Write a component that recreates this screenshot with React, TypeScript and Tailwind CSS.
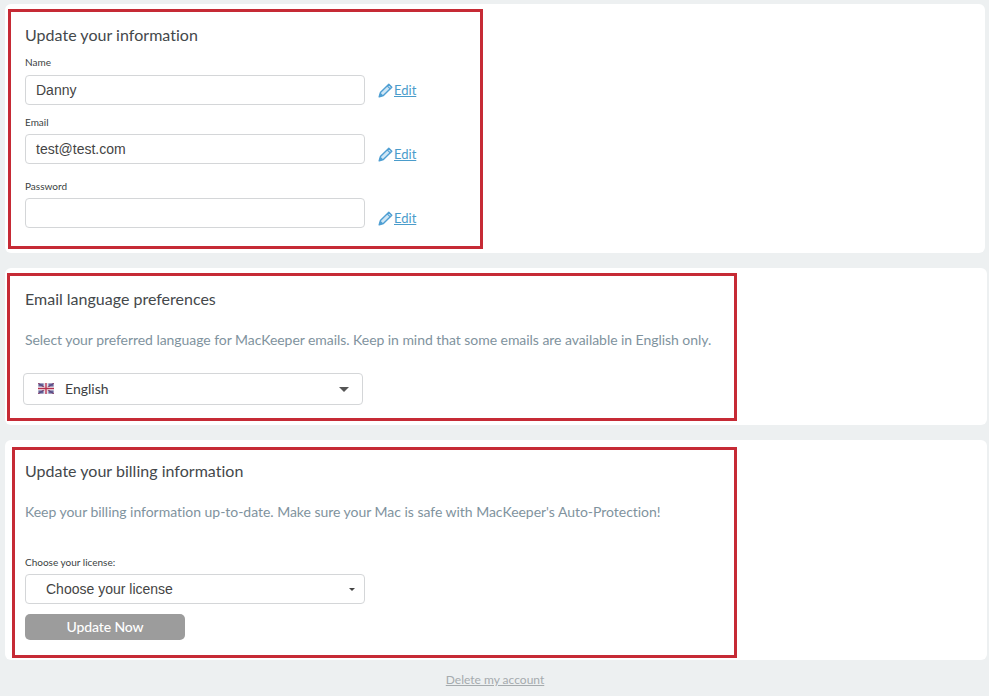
import React from "react";

function Pencil() {
  return (
    <svg width="15" height="15" viewBox="0 0 15 15" className="shrink-0" fill="none">
      <path d="M1.2 13.8 L2.4 9.6 L10.8 1.2 L13.8 4.2 L5.4 12.6 Z" fill="#cfe6f5" stroke="#4f9fd3" strokeWidth="1.4" strokeLinejoin="round" />
      <path d="M1 14 L2.2 9.4 L5.6 12.8 Z" fill="#4f9fd3" />
      <path d="M9.2 2.8 L12.2 5.8" stroke="#4f9fd3" strokeWidth="1.1" />
    </svg>
  );
}

function EditLink({ mt }: { mt: string }) {
  return (
    <a className={`flex items-center ml-[13px] text-[13px] leading-none text-[#4a9ccb] ${mt}`}>
      <Pencil />
      <span className="underline ml-[1px]">Edit</span>
    </a>
  );
}

function Flag() {
  return (
    <svg width="16" height="11" viewBox="0 0 16 11" className="shrink-0">
      <rect width="16" height="11" fill="#dcdbe8" />
      <path d="M0 0 L16 11 M16 0 L0 11" stroke="#a84a68" strokeWidth="1.2" />
      <rect x="0.5" y="0.5" width="5" height="3" fill="#4a4988" opacity="0.8" />
      <rect x="10.5" y="0.5" width="5" height="3" fill="#4a4988" opacity="0.8" />
      <rect x="0.5" y="7.5" width="5" height="3" fill="#4a4988" opacity="0.8" />
      <rect x="10.5" y="7.5" width="5" height="3" fill="#4a4988" opacity="0.8" />
      <path d="M8 0 V11 M0 5.5 H16" stroke="#fff" strokeWidth="2.6" />
      <path d="M8 0 V11 M0 5.5 H16" stroke="#b5304e" strokeWidth="1.4" />
    </svg>
  );
}

function Field({ label, value, labelClass, editMt }: { label: string; value: string; labelClass: string; editMt: string }) {
  return (
    <div>
      <div className={`text-[10px] leading-[12px] text-[#3a3f42] ${labelClass}`}>{label}</div>
      <div className="flex items-center">
        <div className="w-[340px] h-[30px] border border-[#d4d6d8] rounded-[4px] bg-white pl-[10px] flex items-center text-[14px] text-[#444] font-['Liberation_Sans',sans-serif]">
          {value}
        </div>
        <EditLink mt={editMt} />
      </div>
    </div>
  );
}

function Annotation({ className }: { className: string }) {
  return <div className={`absolute border-[3px] border-[#c62a35] pointer-events-none ${className}`} />;
}

export default function App() {
  return (
    <div className="w-[989px] h-[696px] bg-[#edf0f1] overflow-hidden pt-[4px] pl-[5px] pr-[4px] font-['Lato',sans-serif]">
      <section className="relative h-[249px] bg-white rounded-[6px] pl-[20px] pt-[21px]">
        <Annotation className="left-[3px] top-[5px] w-[475px] h-[240px]" />
        <h2 className="text-[16px] leading-[19px] text-[#44484b] font-normal tracking-[0.03px]">Update your information</h2>
        <div className="mt-[12px]">
          <Field label="Name" value="Danny" labelClass="mb-[7px]" editMt="mt-0" />
        </div>
        <div className="mt-[11px]">
          <Field label="Email" value="test@test.com" labelClass="mb-[6px]" editMt="mt-[10px]" />
        </div>
        <div className="mt-[16px]">
          <Field label="Password" value="" labelClass="mb-[6px]" editMt="mt-[10px]" />
        </div>
      </section>

      <section className="relative h-[157px] mt-[15px] mr-[-2px] bg-white rounded-[6px] pt-[21px]">
        <Annotation className="left-[2px] top-[5px] w-[730px] h-[148px]" />
        <h2 className="ml-[20px] text-[16px] leading-[19px] text-[#44484b] font-normal">Email language preferences</h2>
        <p className="ml-[20px] mt-[23px] text-[14px] leading-[17px] text-[#7f939e] tracking-[-0.05px]">
          Select your preferred language for MacKeeper emails. Keep in mind that some emails are available in English only.
        </p>
        <div className="ml-[18px] mt-[25px] w-[340px] h-[32px] border border-[#d4d6d8] rounded-[4px] flex items-center pl-[14px] pr-[13px] pb-[1px]">
          <Flag />
          <span className="ml-[11px] text-[14px] leading-[17px] text-[#3d4144]">English</span>
          <span className="ml-auto mt-[1px] w-0 h-0 border-x-[5.5px] border-x-transparent border-t-[5.5px] border-t-[#555]" />
        </div>
      </section>

      <section className="relative h-[220px] mt-[15px] mr-[-2px] bg-white rounded-[6px] pl-[20px] pt-[21px]">
        <Annotation className="left-[7px] top-[7px] w-[725px] h-[211px]" />
        <h2 className="text-[16px] leading-[19px] text-[#44484b] font-normal tracking-[0.02px]">Update your billing information</h2>
        <p className="mt-[23px] text-[14px] leading-[17px] text-[#7f939e] tracking-[-0.03px]">
          Keep your billing information up-to-date. Make sure your Mac is safe with MacKeeper's Auto-Protection!
        </p>
        <div className="mt-[36px] text-[10px] leading-[12px] text-[#3a3f42]">Choose your license:</div>
        <div className="mt-[6px] w-[340px] h-[30px] border border-[#d4d6d8] rounded-[4px] flex items-center pl-[20px] pr-[9px] text-[14px] text-[#444] font-['Liberation_Sans',sans-serif]">
          <span>Choose your license</span>
          <span className="ml-auto w-0 h-0 border-x-[3px] border-x-transparent border-t-[3px] border-t-[#444]" />
        </div>
        <button className="block mt-[10px] w-[160px] h-[26px] rounded-[5px] bg-[#9c9c9c] text-white text-[14px] leading-none tracking-[-0.1px] font-medium">
          Update Now
        </button>
      </section>

      <div className="mt-[13px] text-center text-[12px] leading-[14px] text-[#a5abae] underline">Delete my account</div>
    </div>
  );
}
